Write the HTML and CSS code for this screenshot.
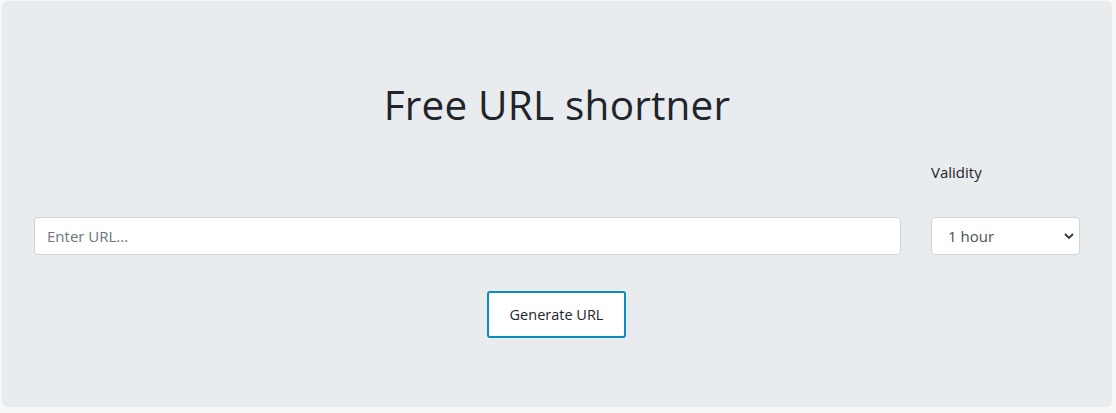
FILE: index.html
```html
<!DOCTYPE html>
<html lang="en">
<head>
<meta charset="utf-8">
<title>Free URL shortner</title>
<link rel="stylesheet" href="styles.css">
</head>
<body>
<div class="jumbotron">
  <h1 class="title">Free URL shortner</h1>
  <div class="row row-label">
    <div class="col-main"></div>
    <div class="col-side"><label class="label" for="validity">Validity</label></div>
  </div>
  <div class="row row-fields">
    <div class="col-main"><input class="field" type="text" placeholder="Enter URL..."></div>
    <div class="col-side">
      <select class="field select" id="validity">
        <option>1 hour</option>
        <option>1 day</option>
        <option>1 week</option>
      </select>
    </div>
  </div>
  <div class="actions">
    <button class="btn" type="button">Generate URL</button>
  </div>
</div>
</body>
</html>
```

FILE: styles.css
```css
* { box-sizing: border-box; }
html, body { margin: 0; }
body {
  background: #f7f7f7;
  font-family: "Open Sans", "Noto Sans", sans-serif;
  color: #212529;
  padding: 1px 4px 6px 2px;
}
.jumbotron {
  background: #e9ecef;
  border-radius: 5px;
  height: 406px;
  padding: 0 32px;
  display: flex;
  flex-direction: column;
}
.title {
  margin: 80px 0 0;
  text-align: center;
  font-size: 40.5px;
  font-weight: 400;
  line-height: 48px;
  letter-spacing: 0.2px;
}
.row {
  display: flex;
  gap: 30px;
}
.col-main { flex: 1 1 auto; }
.col-side { flex: 0 0 149px; }
.row-label { margin-top: 31px; height: 24px; }
.label {
  font-size: 15px;
  line-height: 24px;
  display: block;
}
.row-fields { margin-top: 33px; }
.field {
  display: block;
  width: 100%;
  height: 38px;
  border: 1px solid #ced4da;
  border-radius: 4px;
  background: #fff;
  font-family: inherit;
  font-size: 15px;
  color: #495057;
  padding: 0 12px;
  outline: none;
}
.field::placeholder { color: #6c757d; }
.select {
  -webkit-appearance: none;
  appearance: none;
  padding-left: 16px;
  background-image: url("data:image/svg+xml;utf8,<svg xmlns='http://www.w3.org/2000/svg' width='10' height='6' viewBox='0 0 10 6'><path d='M1 1l4 4 4-4' fill='none' stroke='%23333' stroke-width='1.8'/></svg>");
  background-repeat: no-repeat;
  background-position: right 5px center;
  background-size: 10px 6px;
}
.actions {
  display: flex;
  justify-content: center;
  margin-top: 36px;
}
.btn {
  background: #fff;
  border: 2px solid #0c8bc0;
  border-radius: 3px;
  height: 47px;
  width: 139px;
  padding: 0;
  font-family: inherit;
  font-size: 14.5px;
  color: #212529;
  margin-left: -1px;
}
```
